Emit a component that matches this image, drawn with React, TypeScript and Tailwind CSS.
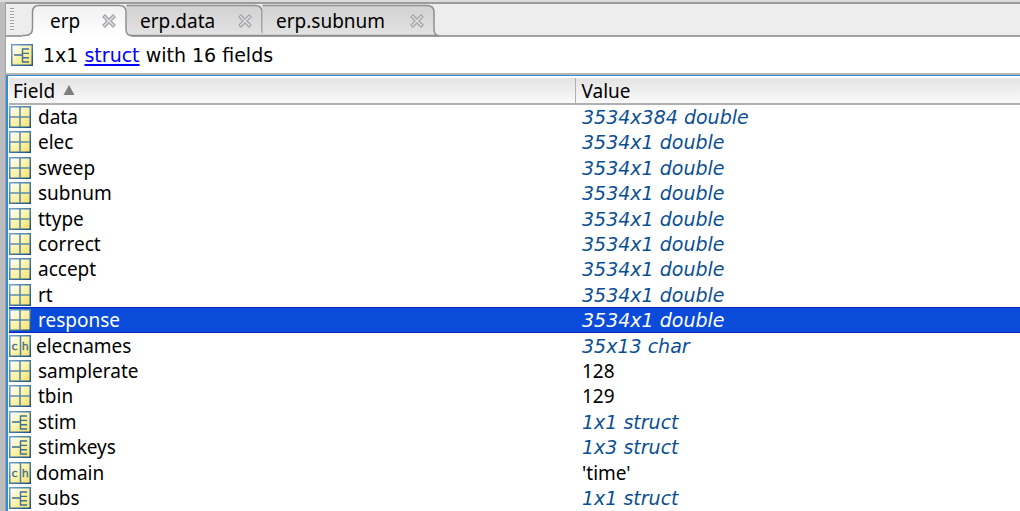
import React, { useState } from "react";

type Kind = "matrix" | "char" | "struct";

interface FieldRow {
  name: string;
  kind: Kind;
  value: string;
  plain?: boolean;
}

const fields: FieldRow[] = [
  { name: "data", kind: "matrix", value: "3534x384 double" },
  { name: "elec", kind: "matrix", value: "3534x1 double" },
  { name: "sweep", kind: "matrix", value: "3534x1 double" },
  { name: "subnum", kind: "matrix", value: "3534x1 double" },
  { name: "ttype", kind: "matrix", value: "3534x1 double" },
  { name: "correct", kind: "matrix", value: "3534x1 double" },
  { name: "accept", kind: "matrix", value: "3534x1 double" },
  { name: "rt", kind: "matrix", value: "3534x1 double" },
  { name: "response", kind: "matrix", value: "3534x1 double" },
  { name: "elecnames", kind: "char", value: "35x13 char" },
  { name: "samplerate", kind: "matrix", value: "128", plain: true },
  { name: "tbin", kind: "matrix", value: "129", plain: true },
  { name: "stim", kind: "struct", value: "1x1 struct" },
  { name: "stimkeys", kind: "struct", value: "1x3 struct" },
  { name: "domain", kind: "char", value: "'time'", plain: true },
  { name: "subs", kind: "struct", value: "1x1 struct" },
];

function IconDefs() {
  return (
    <svg width="0" height="0" className="absolute" aria-hidden="true">
      <defs>
        <linearGradient id="cell" x1="0" y1="0" x2="1" y2="1">
          <stop offset="0.1" stopColor="#fffffb" />
          <stop offset="0.5" stopColor="#fcf3a8" />
          <stop offset="1" stopColor="#f8e06a" />
        </linearGradient>
        <linearGradient id="edge" x1="0" y1="0" x2="1" y2="1">
          <stop offset="0" stopColor="#6fa3c8" />
          <stop offset="1" stopColor="#1f5480" />
        </linearGradient>
        <linearGradient id="tabOn" x1="0" y1="0" x2="0" y2="1">
          <stop offset="0" stopColor="#f1f1f3" />
          <stop offset="1" stopColor="#ffffff" />
        </linearGradient>
        <linearGradient id="tabOff" x1="0" y1="0" x2="0" y2="1">
          <stop offset="0" stopColor="#d2d2d2" />
          <stop offset="1" stopColor="#e2e2e2" />
        </linearGradient>
      </defs>
    </svg>
  );
}

function KindIcon({ kind }: { kind: Kind }) {
  return (
    <svg width="22" height="22" viewBox="0 0 22 22" className="block shrink-0" aria-hidden="true">
      <rect x="0.75" y="0.75" width="20.5" height="20.5" fill="url(#cell)" stroke="url(#edge)" strokeWidth="1.5" />
      {kind === "matrix" && (
        <path d="M11 1V21M1 11H21" stroke="#5c8dae" strokeWidth="1.6" fill="none" />
      )}
      {kind === "struct" && (
        <path
          d="M3 11H11.5M11.5 4.5V18.5M11 5H18M11 9.4H18M11 13.7H18M11 18H18"
          stroke="#3d6f99"
          strokeWidth="1.4"
          fill="none"
        />
      )}
      {kind === "char" && (
        <>
          <path d="M11.5 1V21" stroke="#4d83aa" strokeWidth="1.5" />
          <text x="2.5" y="15" fontSize="11" fontFamily="DejaVu Sans, sans-serif" fill="#3f6a8d" stroke="#3f6a8d" strokeWidth="0.3">c</text>
          <text x="12.7" y="15" fontSize="11" fontFamily="DejaVu Sans, sans-serif" fill="#3f6a8d" stroke="#3f6a8d" strokeWidth="0.3">h</text>
        </>
      )}
    </svg>
  );
}

interface TabInfo {
  label: string;
  width: number;
  box: string;
}

const tabs: TabInfo[] = [
  { label: "erp", width: 94, box: "w-[94px] pl-[18px]" },
  { label: "erp.data", width: 136, box: "w-[136px] pl-[14px]" },
  { label: "erp.subnum", width: 172, box: "w-[172px] pl-[14px]" },
];

function TabShape({ width, active, first }: { width: number; active: boolean; first: boolean }) {
  const w = width + 16;
  const r = width + 10;
  const right = `H${r - 7}Q${r} 1.5 ${r} 8V25Q${r} 31.5 ${r + 5} 31.5`;
  const left = first || active ? "M0 31.5H3Q10.5 31.5 10.5 24V8Q10.5 1.5 17 1.5" : "M10.5 31.5V1.5";
  return (
    <svg
      width={w}
      height="33"
      viewBox={`0 0 ${w} 33`}
      className="absolute -left-[10px] top-0 block"
      aria-hidden="true"
    >
      <path d={`${left}${right}${active ? "V33H0V31.5" : "H10.5"}Z`} fill={active ? "url(#tabOn)" : "url(#tabOff)"} />
      <path
        d={active ? `${left}${right}` : `M10.5 1.5${right}H10.5`}
        fill="none"
        stroke="#8e8e8e"
        strokeWidth="1.5"
      />
    </svg>
  );
}

function CloseIcon() {
  return (
    <svg width="14" height="14" viewBox="0 0 14 14" className="block" aria-hidden="true">
      <path d="M1.5 1.5L12.5 12.5M12.5 1.5L1.5 12.5" stroke="#a4a4a9" strokeWidth="4" />
      <path d="M2.2 2.2L11.8 11.8M11.8 2.2L2.2 11.8" stroke="#e0e0e3" strokeWidth="1.5" />
    </svg>
  );
}

export default function App() {
  const [active, setActive] = useState(0);
  const [selected, setSelected] = useState(8);

  return (
    <div className="flex min-h-screen flex-col overflow-hidden bg-white font-['Noto_Sans',sans-serif] text-[19px] leading-6 text-black">
      <IconDefs />
      <div className="h-[2px] bg-[#dcdcdc]" />
      <div className="flex grow">
        <div className="w-[6px] shrink-0 border-r border-[#a3a3a5] bg-[#bdbdc0]" />
        <div className="flex min-w-0 grow flex-col">
          <div className="border-t-2 border-[#9b9b9b] bg-[#ededed]">
            <div className="flex h-[33px] border-b-2 border-[#a0a0a0]">
              <div className="flex w-[26px] shrink-0 pl-1 pt-1">
                <div className="h-[23px] w-1 bg-[repeating-linear-gradient(#a0a0a0_0_1px,#f4f4f4_1px_3px)]" />
              </div>
              <div role="tablist" className="flex">
                {tabs.map((tab, i) => (
                  <div
                    key={tab.label}
                    className={`relative flex h-[33px] items-center justify-between pr-[10px] ${tab.box} ${i === active ? "z-10" : ""}`}
                  >
                    <TabShape width={tab.width} active={i === active} first={i === 0} />
                    <button
                      role="tab"
                      aria-selected={i === active}
                      onClick={() => setActive(i)}
                      className="relative leading-6"
                    >
                      {tab.label}
                    </button>
                    <button aria-label={`Close ${tab.label}`} className="relative">
                      <CloseIcon />
                    </button>
                  </div>
                ))}
              </div>
            </div>
          </div>

          <div className="flex h-9 items-center gap-[10px] pl-[5px]">
            <KindIcon kind="struct" />
            <p className="font-['DejaVu_Sans',sans-serif]">
              1x1{" "}
              <a href="#struct" className="text-[#0000ff] underline decoration-2 underline-offset-2">
                struct
              </a>{" "}
              with 16 fields
            </p>
          </div>

          <div className="grow border-t-2 border-[#b4b4b6]">
            <div className="h-full border-l-2 border-t border-[#2f8fd8] pl-px pt-[2px]">
              <table className="w-full table-fixed border-collapse text-left">
                <colgroup>
                  <col className="w-[566px]" />
                  <col />
                </colgroup>
                <thead>
                  <tr className="h-[26px] bg-linear-to-b from-[#e4e4e4] to-[#fafafa]">
                    <th className="border-b-2 border-[#b0b0b0] p-0 pl-1 font-normal">
                      <button className="flex items-center gap-2 leading-6">
                        Field
                        <svg width="12" height="11" viewBox="0 0 12 11" aria-hidden="true">
                          <path d="M6 0L11.5 10H0.5Z" fill="#7d7d7d" />
                        </svg>
                      </button>
                    </th>
                    <th className="border-b-2 border-l border-[#b0b0b0] p-0 pl-[6px] font-normal">Value</th>
                  </tr>
                </thead>
                <tbody>
                  {fields.map((f, i) => {
                    const on = i === selected;
                    return (
                      <tr
                        key={f.name}
                        onClick={() => setSelected(i)}
                        aria-selected={on}
                        className={`h-[25px] nth-[5n+2]:h-[26px] nth-[5n+4]:h-[26px] ${on ? "bg-[#0a4bd9] text-white shadow-[inset_0_1px_#0a1fc4,inset_0_-1px_#0a1fc4]" : ""}`}
                      >
                        <td className="p-0">
                          <div className={`flex items-center ${f.kind === "char" ? "gap-[5px]" : "gap-[7px]"}`}>
                            <KindIcon kind={f.kind} />
                            <span>{f.name}</span>
                          </div>
                        </td>
                        <td
                          className={`p-0 pl-[7px] ${f.plain ? "" : "font-['DejaVu_Sans',sans-serif] italic"} ${on || f.plain ? "" : "text-[#0b4f93]"}`}
                        >
                          {f.value}
                        </td>
                      </tr>
                    );
                  })}
                </tbody>
              </table>
            </div>
          </div>
        </div>
      </div>
    </div>
  );
}
